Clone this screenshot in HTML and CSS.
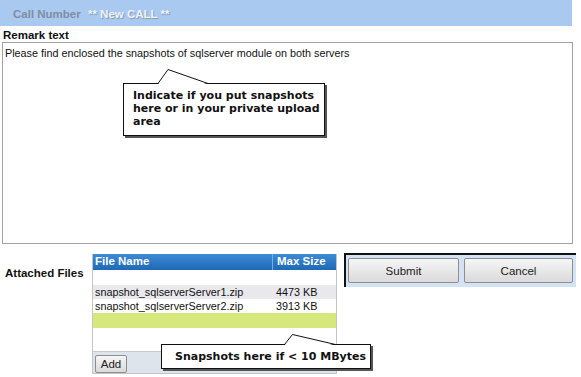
FILE: index.html
```html
<!DOCTYPE html>
<html>
<head>
	<meta charset="utf-8">
	<link rel="stylesheet" href="styles.css">
</head>
<body>
	<div class="call-bar">
		<span class="call-label">Call Number</span>
		<span class="call-value">** New CALL **</span>
	</div>

	<div class="remark-label">Remark text</div>
	<div class="remark-box">
		<div class="remark-text">Please find enclosed the snapshots of sqlserver module on both servers</div>
		<div class="callout callout-remark">
			<svg class="callout-tip" width="54" height="16">
				<polygon points="1,15.5 11,0.5 51,15.5" fill="#fff"/>
				<polyline points="1,14.5 11,0.5 51,14.5" fill="none" stroke="#111" stroke-width="1"/>
			</svg>
			Indicate if you put snapshots here or in your private upload area
		</div>
	</div>

	<div class="attach-row">
		<div class="attach-label">Attached Files</div>

		<div class="file-table">
			<div class="file-head">
				<div class="col-name">File Name</div>
				<div class="col-size">Max Size</div>
			</div>
			<div class="file-row file-empty"></div>
			<div class="file-row file-alt">
				<div class="col-name">snapshot_sqlserverServer1.zip</div>
				<div class="col-size">4473 KB</div>
			</div>
			<div class="file-row">
				<div class="col-name">snapshot_sqlserverServer2.zip</div>
				<div class="col-size">3913 KB</div>
			</div>
			<div class="file-row file-new"></div>
			<div class="file-spacer"></div>
			<div class="file-foot">
				<button class="btn btn-add">Add</button>
			</div>
		</div>

		<div class="action-panel">
			<button class="btn btn-submit">Submit</button>
			<button class="btn btn-cancel">Cancel</button>
		</div>

		<div class="callout callout-files">
			<svg class="callout-tip" width="53" height="12">
				<polygon points="0.5,11.5 8.5,0.5 51.5,11.5" fill="#fff"/>
				<polyline points="0.5,10.5 8.5,0.5 51.5,10.5" fill="none" stroke="#111" stroke-width="1"/>
			</svg>
			Snapshots here if &lt; 10 MBytes
		</div>
	</div>
</body>
</html>
```

FILE: styles.css
```css
html, body {
	margin: 0;
	padding: 0;
	background-color: #fff;
	font-family: "Liberation Sans", Arial, sans-serif;
	font-size: 11.5px;
	color: #111;
}

.call-bar {
	width: 559px;
	height: 26px;
	line-height: 28px;
	padding-left: 13px;
	background-color: #a9c9f0;
	font-weight: bold;
}
.call-label {
	color: #7f8ea0;
}
.call-value {
	margin-left: 4px;
	color: #eef3fa;
	text-shadow: 1px 1px 1px #8597b0;
}

.remark-label {
	padding: 2px 3px 0;
	line-height: 14px;
	font-weight: bold;
}
.remark-box {
	position: relative;
	margin-left: 2px;
	width: 569px;
	height: 200px;
	border: 1px solid #a3a3a3;
}
.remark-text {
	padding: 3px 2px;
	line-height: 14px;
	font-size: 10.8px;
}

/* notes drawn over the form */
.callout {
	position: absolute;
	background-color: #fff;
	border: 1px solid #111;
	box-shadow: 2px 2px 0 #555;
	font-family: "DejaVu Sans", Verdana, sans-serif;
	font-weight: bold;
	font-size: 11px;
	color: #111;
}
.callout-tip {
	position: absolute;
	overflow: visible;
}
.callout-remark {
	left: 120px;
	top: 40px;
	width: 188px;
	padding: 5px 3px 7px 9px;
	line-height: 13px;
}
.callout-remark .callout-tip {
	left: 33px;
	top: -15px;
}
.callout-files {
	left: 161px;
	top: 91px;
	width: 195px;
	padding-left: 13px;
	line-height: 23px;
}
.callout-files .callout-tip {
	left: 122px;
	top: -11px;
}

.attach-row {
	position: relative;
	display: flex;
	align-items: flex-start;
	margin-top: 9px;
}
.attach-label {
	width: 87px;
	padding: 13px 0 0 5px;
	line-height: 14px;
	font-weight: bold;
}

.file-table {
	width: 243px;
	margin-top: 1px;
	border: 1px solid #c4c4c4;
	border-top: none;
	background-color: #fff;
}
.file-head {
	display: flex;
	height: 16px;
	line-height: 15px;
	background: linear-gradient(#3d8ad6, #1f69b6);
	color: #fff;
	font-weight: bold;
}
.file-head .col-size {
	border-left: 1px solid #79aee3;
}
.col-name {
	width: 177px;
	padding-left: 2px;
}
.col-size {
	flex: 1;
	padding-left: 4px;
}
.file-row {
	display: flex;
	height: 14px;
	line-height: 14px;
	font-size: 10.8px;
}
.file-empty {
	height: 15px;
}
.file-alt {
	background-color: #e8e8ed;
}
.file-new {
	height: 15px;
	background-color: #d6e87c;
}
.file-spacer {
	height: 23px;
}
.file-foot {
	height: 21px;
	padding-left: 2px;
	border-top: 1px solid #c2cad3;
	background-color: #dde4ec;
}

.btn {
	font-family: "Liberation Sans", Arial, sans-serif;
	font-size: 11.5px;
	color: #222;
	background: linear-gradient(#f6f6f6, #dadada);
	border: 1px solid #8e8e8e;
	border-radius: 2px;
	padding: 0;
}
.btn-add {
	width: 32px;
	height: 18px;
	margin-top: 3px;
}

.action-panel {
	display: flex;
	gap: 5px;
	width: 225px;
	height: 29px;
	margin-left: 7px;
	padding: 3px 3px 0 2px;
	border-top: 2px solid #111;
	border-left: 2px solid #111;
	background-color: #d3e3f5;
}
.btn-submit {
	width: 111px;
	height: 25px;
}
.btn-cancel {
	width: 109px;
	height: 25px;
}
```
